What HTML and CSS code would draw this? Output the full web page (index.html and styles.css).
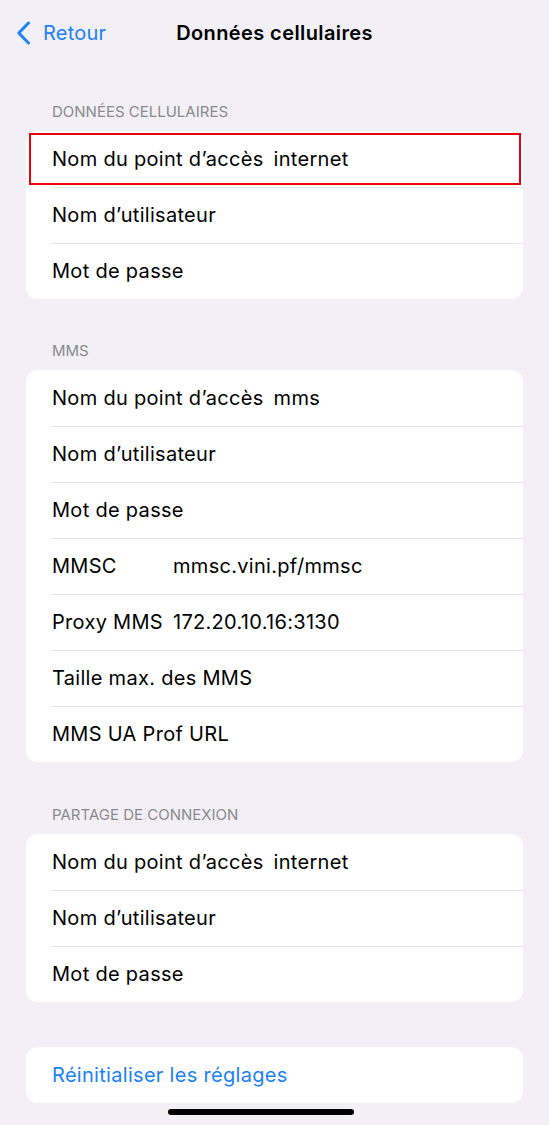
FILE: index.html
```html
<!DOCTYPE html>
<html lang="fr">
<head>
  <meta charset="UTF-8">
  <meta name="viewport" content="width=device-width, initial-scale=1.0">
  <title>Données cellulaires</title>
  <link rel="stylesheet" href="styles.css">
</head>
<body>
  <div class="screen">
    <div class="navbar">
      <a class="back" href="#">
        <svg class="chevron" width="15" height="24" viewBox="0 0 15 24">
          <path d="M12.5 2 L2.8 12 L12.5 22" fill="none" stroke="#1a82f7" stroke-width="3" stroke-linecap="round" stroke-linejoin="round"/>
        </svg>
        <span>Retour</span>
      </a>
      <div class="title">Données cellulaires</div>
    </div>

    <div class="section first">
      <div class="section-header">DONNÉES CELLULAIRES</div>
      <div class="card">
        <div class="row selected">
          <span class="label">Nom du point d’accès</span>
          <span class="value">internet</span>
        </div>
        <div class="row"><span class="label">Nom d’utilisateur</span></div>
        <div class="row"><span class="label">Mot de passe</span></div>
      </div>
    </div>

    <div class="section mms">
      <div class="section-header">MMS</div>
      <div class="card">
        <div class="row">
          <span class="label">Nom du point d’accès</span>
          <span class="value">mms</span>
        </div>
        <div class="row"><span class="label">Nom d’utilisateur</span></div>
        <div class="row"><span class="label">Mot de passe</span></div>
        <div class="row">
          <span class="label">MMSC</span>
          <span class="value">mmsc.vini.pf/mmsc</span>
        </div>
        <div class="row">
          <span class="label">Proxy MMS</span>
          <span class="value">172.20.10.16:3130</span>
        </div>
        <div class="row"><span class="label">Taille max. des MMS</span></div>
        <div class="row"><span class="label">MMS UA Prof URL</span></div>
      </div>
    </div>

    <div class="section tethering">
      <div class="section-header">PARTAGE DE CONNEXION</div>
      <div class="card">
        <div class="row">
          <span class="label">Nom du point d’accès</span>
          <span class="value">internet</span>
        </div>
        <div class="row"><span class="label">Nom d’utilisateur</span></div>
        <div class="row"><span class="label">Mot de passe</span></div>
      </div>
    </div>

    <div class="section reset">
      <div class="card">
        <div class="row link">Réinitialiser les réglages</div>
      </div>
    </div>

    <div class="home-indicator"></div>
  </div>
</body>
</html>
```

FILE: styles.css
```css
body {
  margin: 0;
  padding: 0;
  background-color: #f2f0f6;
  font-family: Inter, "Noto Sans", sans-serif;
  color: #000;
}

.screen {
  width: 549px;
  height: 1125px;
  overflow: hidden;
}

.navbar {
  height: 66px;
  display: flex;
  align-items: center;
}

.back {
  display: flex;
  align-items: center;
  gap: 12px;
  margin-left: 16px;
  color: #1a82f7;
  text-decoration: none;
  font-size: 20px;
  letter-spacing: 0.2px;
}

.title {
  margin-left: 70px;
  font-size: 20px;
  font-weight: 600;
  letter-spacing: 0.4px;
}

.section {
  margin: 0 26px;
}

.section.first {
  margin-top: 36px;
}

.section.mms {
  margin-top: 42px;
}

.section.tethering {
  margin-top: 43px;
}

.section.reset {
  margin-top: 45px;
}

.section-header {
  height: 20px;
  line-height: 20px;
  padding-left: 26px;
  margin-bottom: 9px;
  font-size: 15px;
  color: #8a8a8e;
}

.card {
  background-color: #fff;
  border-radius: 12px;
  position: relative;
}

.row {
  height: 56px;
  display: flex;
  align-items: center;
  gap: 10px;
  padding-left: 26px;
  font-size: 20px;
  letter-spacing: 0.3px;
  position: relative;
  box-sizing: border-box;
}

.row + .row::before {
  content: "";
  position: absolute;
  top: 0;
  left: 25px;
  right: 0;
  height: 1px;
  background-color: #e5e5e8;
}

.label {
  min-width: 111px;
}

.row.selected::after {
  content: "";
  position: absolute;
  top: 2px;
  left: 3px;
  right: 2px;
  bottom: 2px;
  border: 2px solid #e8000b;
}

.row.link {
  color: #1a82f7;
}

.home-indicator {
  width: 186px;
  height: 6px;
  margin: 6px 0 0 168px;
  background-color: #000;
  border-radius: 3px;
}
```
